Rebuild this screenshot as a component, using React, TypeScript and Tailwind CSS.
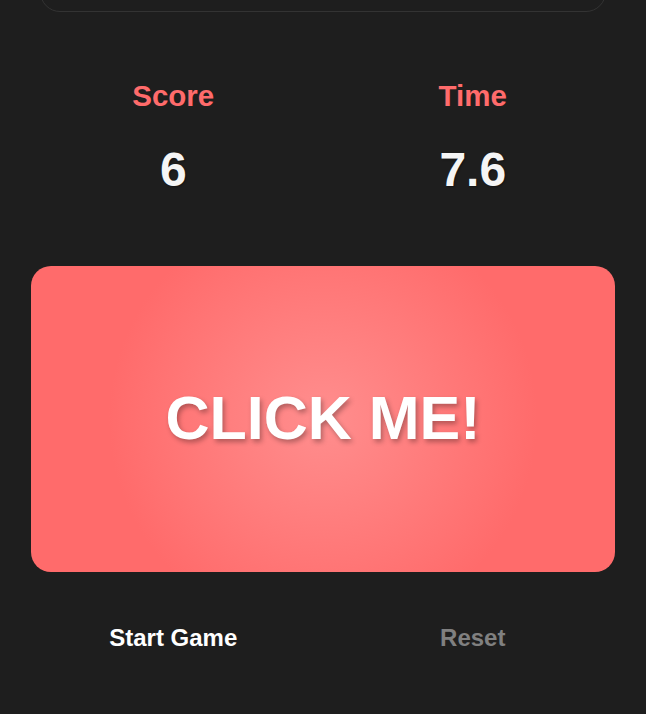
import React, { useState } from 'react';

const StatBox = ({ label, value }: { label: string; value: string }) => (
    <div className="flex flex-col items-center">
        <div className="text-[29.5px] leading-none font-bold text-[#ff6b6b]">{label}</div>
        <div className="mt-[35px] text-[48px] leading-none font-bold text-[#f5f5f5] [text-shadow:1px_1px_2px_rgba(0,0,0,0.4)]">
            {value}
        </div>
    </div>
);

export default function App() {
    const [score, setScore] = useState(6);
    const time = '7.6';

    return (
        <div className="min-h-screen bg-[#1e1e1e] px-[31px] font-['Liberation_Sans',Arial,sans-serif] overflow-hidden">
            <div className="mx-[9px] -mt-[40px] h-[52px] rounded-[20px] border border-[#333333]" />

            <div className="mt-[69px] grid grid-cols-2 gap-[15px] text-center">
                <StatBox label="Score" value={String(score)} />
                <StatBox label="Time" value={time} />
            </div>

            <button
                onClick={() => setScore(score + 1)}
                className="mt-[72px] flex h-[306px] w-full items-center justify-center rounded-[20px] bg-[radial-gradient(circle_at_center,#ff8e8e_0%,#ff6b6b_65%)] text-[61px] font-bold text-white [text-shadow:2px_3px_5px_rgba(0,0,0,0.3)]"
            >
                CLICK ME!
            </button>

            <div className="mt-[54px] grid grid-cols-2 gap-[15px] text-center text-[24px] leading-none font-bold">
                <button className="text-white">Start Game</button>
                <button className="text-[#808080]">Reset</button>
            </div>
        </div>
    );
}
